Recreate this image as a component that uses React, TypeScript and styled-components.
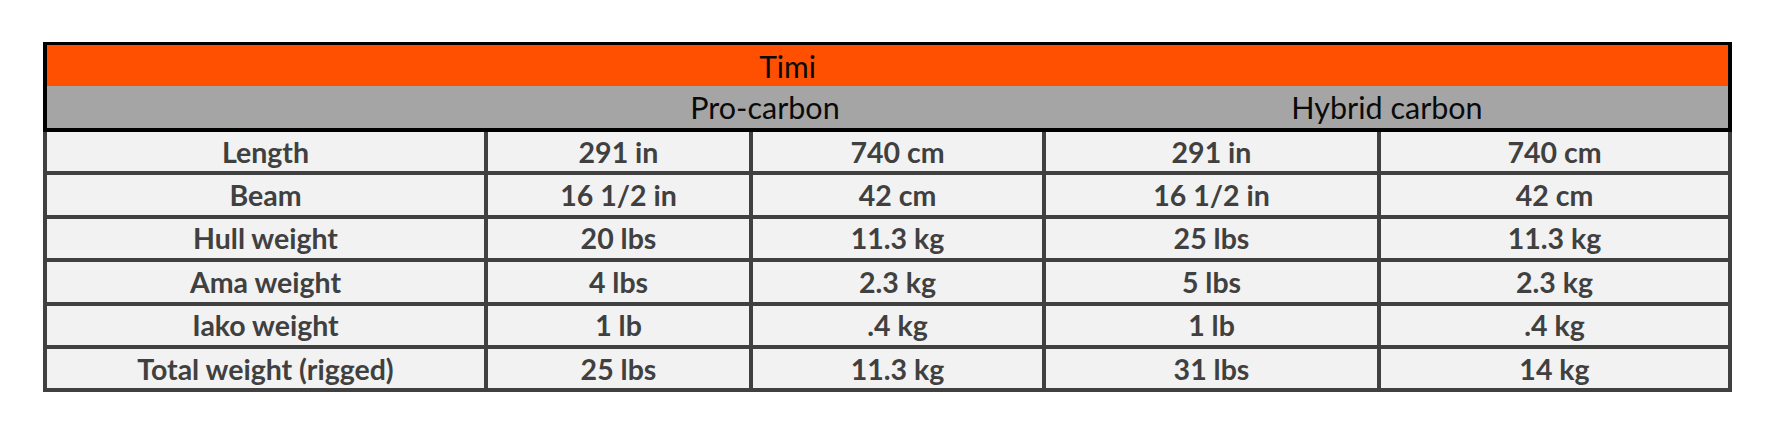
import React from 'react';
import styled, { createGlobalStyle } from 'styled-components';

const COLUMNS = '437px 261px 289px 331px 347px';

const rows: string[][] = [
  ['Length', '291 in', '740 cm', '291 in', '740 cm'],
  ['Beam', '16 1/2 in', '42 cm', '16 1/2 in', '42 cm'],
  ['Hull weight', '20 lbs', '11.3 kg', '25 lbs', '11.3 kg'],
  ['Ama weight', '4 lbs', '2.3 kg', '5 lbs', '2.3 kg'],
  ['Iako weight', '1 lb', '.4 kg', '1 lb', '.4 kg'],
  ['Total weight (rigged)', '25 lbs', '11.3 kg', '31 lbs', '14 kg'],
];

const GlobalStyle = createGlobalStyle`
  html, body {
    margin: 0;
    padding: 0;
    background: #ffffff;
  }
  body {
    font-family: Lato, "Open Sans", "Liberation Sans", sans-serif;
  }
`;

const Page = styled.div`
  width: 1774px;
  height: 438px;
  padding: 42px 0 0 43px;
  box-sizing: border-box;
`;

const SpecTable = styled.div`
  width: 1689px;
`;

const Header = styled.div`
  border: 4px solid #000000;
  border-top-width: 3px;
`;

const TitleRow = styled.div`
  height: 41px;
  background: #fe5000;
  display: flex;
  align-items: center;
  justify-content: center;
  padding-right: 200px;
  font-size: 30px;
  color: #0a0a0a;
`;

const SubRow = styled.div`
  height: 42px;
  background: #a5a5a5;
  display: grid;
  grid-template-columns: ${COLUMNS};
  column-gap: 4px;
  font-size: 30.5px;
  color: #0a0a0a;
`;

const SubCell = styled.div<{ $span?: number }>`
  grid-column: span ${({ $span }) => $span ?? 1};
  display: flex;
  align-items: center;
  justify-content: center;
`;

const Body = styled.div`
  display: grid;
  grid-template-columns: ${COLUMNS};
  grid-auto-rows: 39.4px;
  gap: 4px;
  padding: 0 4px 4px;
  background: #404040;
`;

const Cell = styled.div`
  background: #f2f2f2;
  display: flex;
  align-items: center;
  justify-content: center;
  font-size: 28.5px;
  font-weight: 700;
  color: #404040;
  white-space: nowrap;
`;

export default function App() {
  return (
    <>
      <GlobalStyle />
      <Page>
        <SpecTable>
          <Header>
            <TitleRow>Timi</TitleRow>
            <SubRow>
              <SubCell />
              <SubCell $span={2}>Pro-carbon</SubCell>
              <SubCell $span={2}>Hybrid carbon</SubCell>
            </SubRow>
          </Header>
          <Body>
            {rows.map((row) =>
              row.map((value, i) => <Cell key={row[0] + i}>{value}</Cell>)
            )}
          </Body>
        </SpecTable>
      </Page>
    </>
  );
}
